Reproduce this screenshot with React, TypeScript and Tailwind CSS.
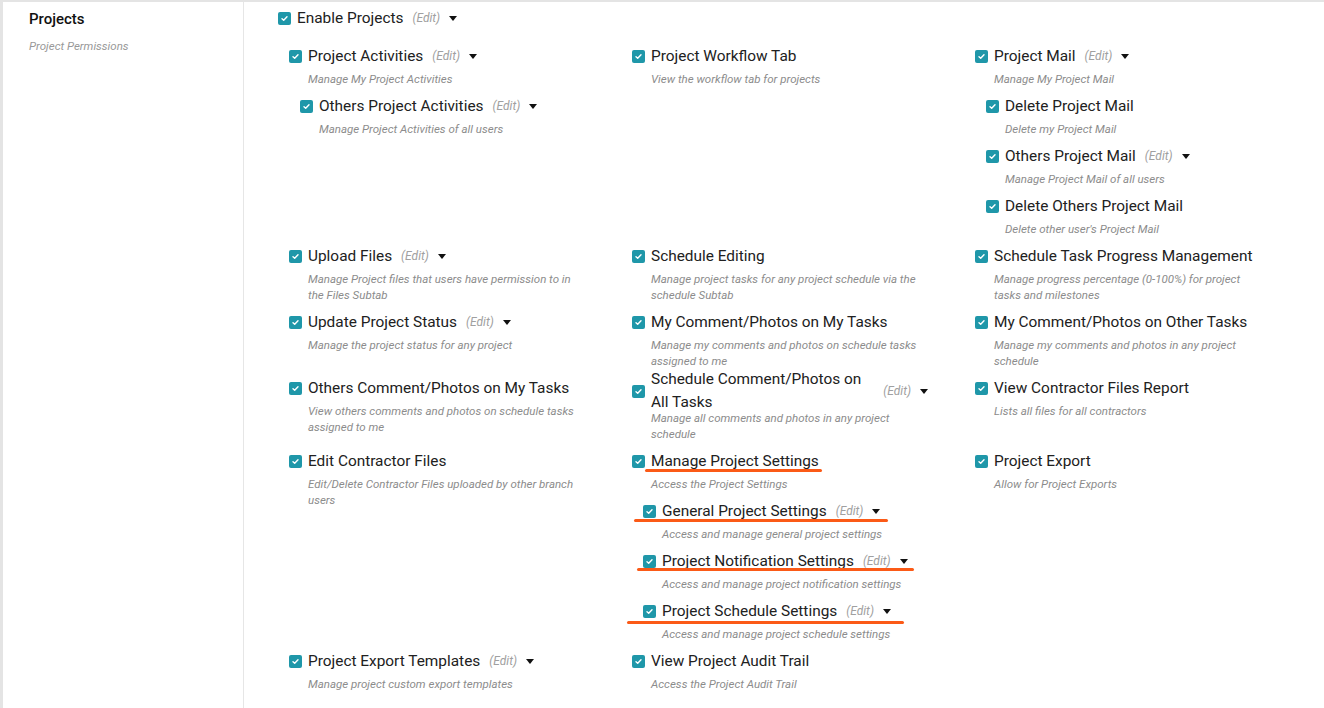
import React from 'react'

type Perm = {
  label: string
  desc: string
  edit?: boolean
  wrap?: boolean
  // hand-drawn highlight under the row: [left offset, width, top offset]
  mark?: [number, number, number]
  children?: Perm[]
}

const rows: Perm[][] = [
  [
    {
      label: 'Project Activities',
      desc: 'Manage My Project Activities',
      edit: true,
      children: [{ label: 'Others Project Activities', desc: 'Manage Project Activities of all users', edit: true }],
    },
    { label: 'Project Workflow Tab', desc: 'View the workflow tab for projects' },
    {
      label: 'Project Mail',
      desc: 'Manage My Project Mail',
      edit: true,
      children: [
        { label: 'Delete Project Mail', desc: 'Delete my Project Mail' },
        { label: 'Others Project Mail', desc: 'Manage Project Mail of all users', edit: true },
        { label: 'Delete Others Project Mail', desc: "Delete other user's Project Mail" },
      ],
    },
  ],
  [
    { label: 'Upload Files', desc: 'Manage Project files that users have permission to in the Files Subtab', edit: true },
    { label: 'Schedule Editing', desc: 'Manage project tasks for any project schedule via the schedule Subtab' },
    { label: 'Schedule Task Progress Management', desc: 'Manage progress percentage (0-100%) for project tasks and milestones' },
  ],
  [
    { label: 'Update Project Status', desc: 'Manage the project status for any project', edit: true },
    { label: 'My Comment/Photos on My Tasks', desc: 'Manage my comments and photos on schedule tasks assigned to me' },
    { label: 'My Comment/Photos on Other Tasks', desc: 'Manage my comments and photos in any project schedule' },
  ],
  [
    { label: 'Others Comment/Photos on My Tasks', desc: 'View others comments and photos on schedule tasks assigned to me' },
    { label: 'Schedule Comment/Photos on All Tasks', desc: 'Manage all comments and photos in any project schedule', edit: true, wrap: true },
    { label: 'View Contractor Files Report', desc: 'Lists all files for all contractors' },
  ],
  [
    { label: 'Edit Contractor Files', desc: 'Edit/Delete Contractor Files uploaded by other branch users' },
    {
      label: 'Manage Project Settings',
      desc: 'Access the Project Settings',
      mark: [13, 177, 20],
      children: [
        { label: 'General Project Settings', desc: 'Access and manage general project settings', edit: true, mark: [-9, 254, 20] },
        { label: 'Project Notification Settings', desc: 'Access and manage project notification settings', edit: true, mark: [-6, 277, 19] },
        { label: 'Project Schedule Settings', desc: 'Access and manage project schedule settings', edit: true, mark: [-16, 277, 22] },
      ],
    },
    { label: 'Project Export', desc: 'Allow for Project Exports' },
  ],
  [
    { label: 'Project Export Templates', desc: 'Manage project custom export templates', edit: true },
    { label: 'View Project Audit Trail', desc: 'Access the Project Audit Trail' },
    null as unknown as Perm,
  ],
]

function Check() {
  return (
    <span className="flex h-[13px] w-[13px] shrink-0 items-center justify-center rounded-[2px] bg-[#1f97a9]">
      <svg width="9" height="9" viewBox="0 0 9 9" fill="none">
        <path d="M2 4.7 L3.7 6.3 L7 2.8" stroke="white" strokeWidth="1.4" strokeLinecap="round" strokeLinejoin="round" />
      </svg>
    </span>
  )
}

function Caret() {
  return <span className="ml-[3px] h-0 w-0 shrink-0 border-x-4 border-t-[5px] border-x-transparent border-t-[#111]" />
}

function Edit() {
  return (
    <>
      <span className="ml-[3px] shrink-0 text-[12px] italic text-[#a0a0a0]">(Edit)</span>
      <Caret />
    </>
  )
}

function Item({ p, nested }: { p: Perm; nested?: boolean }) {
  return (
    <div className={`${nested ? 'ml-[11px]' : ''} ${p.wrap ? '-mt-[8px]' : ''}`}>
      <div className="relative flex items-center gap-[6px]">
        <Check />
        <span className={`text-[15.4px] text-[#212121] ${p.wrap ? 'leading-[23px]' : 'leading-6'}`}>{p.label}</span>
        {p.edit && <Edit />}
        {p.mark && (
          <span
            className="absolute h-[2.5px] rounded-full bg-[#fb5a17]"
            style={{ left: p.mark[0], width: p.mark[1], top: p.mark[2] }}
          />
        )}
      </div>
      <p
        className={`ml-[19px] mb-[7px] w-[270px] text-[11.5px] italic leading-4 text-[#8c8c8c] ${
          p.wrap ? '-mt-[4px]' : 'mt-[3px]'
        }`}
      >
        {p.desc}
      </p>
      {p.children?.map((c) => <Item key={c.label} p={c} nested />)}
    </div>
  )
}

export default function App() {
  return (
    <div className="flex min-h-screen border-t-2 border-l-[3px] border-[#e4e4e4] bg-white font-['Roboto',sans-serif]">
      <aside className="w-[241px] shrink-0 border-r border-[#e6e6e6] pl-[26px] pt-[5px]">
        <h2 className="text-[15px] font-medium leading-6 text-[#111]">Projects</h2>
        <p className="mt-[7px] text-[11.5px] italic leading-4 text-[#999]">Project Permissions</p>
      </aside>
      <main className="flex-1 pl-[34px] pt-[4px]">
        <div className="flex items-center gap-[6px]">
          <Check />
          <span className="text-[15.4px] leading-6 text-[#212121]">Enable Projects</span>
          <Edit />
        </div>
        <div className="ml-[11px] mt-[14px] grid grid-cols-[296px_296px_296px] gap-x-[47px] items-start">
          {rows.flat().map((p, i) => (p ? <Item key={p.label} p={p} /> : <div key={i} />))}
        </div>
      </main>
    </div>
  )
}
